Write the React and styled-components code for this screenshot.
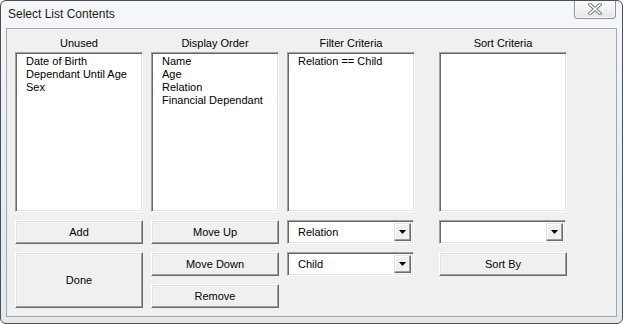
import React from 'react'
import styled, { createGlobalStyle } from 'styled-components'

const GlobalStyle = createGlobalStyle`
    html, body {
        margin:0;
        padding:0;
        background:#ffffff;
    }
    body {
        font-family:"Liberation Sans", Arial, sans-serif;
    }
`

const columns = [
    {
        title: 'Unused',
        items: ['Date of Birth', 'Dependant Until Age', 'Sex'],
    },
    {
        title: 'Display Order',
        items: ['Name', 'Age', 'Relation', 'Financial Dependant'],
    },
    {
        title: 'Filter Criteria',
        items: ['Relation == Child'],
    },
    {
        title: 'Sort Criteria',
        items: [],
        offset: 16,
    },
]

function CloseGlyph() {
    return (
        <svg width="14" height="12" viewBox="0 0 14 12">
            <path d="M2 1.5 L12 10.5 M12 1.5 L2 10.5" stroke="#7a7a7a" strokeWidth="3.6" strokeLinecap="square" fill="none"/>
            <path d="M2 1.5 L12 10.5 M12 1.5 L2 10.5" stroke="#ffffff" strokeWidth="1.6" strokeLinecap="square" fill="none"/>
        </svg>
    )
}

function Combo({value}) {
    return (
        <ComboBox>
            <ComboText>{value}</ComboText>
            <ComboButton>
                <svg width="7" height="4" viewBox="0 0 7 4">
                    <path d="M0 0 H7 L3.5 4 Z" fill="#000"/>
                </svg>
            </ComboButton>
        </ComboBox>
    )
}

export default function App() {
    return (
        <React.Fragment>
            <GlobalStyle/>
            <Window>
                <TitleBar>
                    <Title>Select List Contents</Title>
                    <CloseButton><CloseGlyph/></CloseButton>
                </TitleBar>
                <Client>
                    <Columns>
                        {columns.map((col)=>(
                            <Column key={col.title} offset={col.offset}>
                                <Label>{col.title}</Label>
                                <ListBox>
                                    {col.items.map((item)=>(
                                        <ListItem key={item}>{item}</ListItem>
                                    ))}
                                </ListBox>
                                <Controls>
                                    {col.title === 'Unused' && (
                                        <React.Fragment>
                                            <Button>Add</Button>
                                            <Button tall>Done</Button>
                                        </React.Fragment>
                                    )}
                                    {col.title === 'Display Order' && (
                                        <React.Fragment>
                                            <Button>Move Up</Button>
                                            <Button>Move Down</Button>
                                            <Button>Remove</Button>
                                        </React.Fragment>
                                    )}
                                    {col.title === 'Filter Criteria' && (
                                        <React.Fragment>
                                            <Combo value="Relation"/>
                                            <Combo value="Child"/>
                                        </React.Fragment>
                                    )}
                                    {col.title === 'Sort Criteria' && (
                                        <React.Fragment>
                                            <Combo value=""/>
                                            <Button>Sort By</Button>
                                        </React.Fragment>
                                    )}
                                </Controls>
                            </Column>
                        ))}
                    </Columns>
                </Client>
            </Window>
        </React.Fragment>
    )
}

const Window = styled.div`
    box-sizing:border-box;
    width:623px;
    height:324px;
    border:1px solid #4a4f55;
    border-radius:6px;
    background:linear-gradient(180deg,#f6f7f9 0%,#eceff2 40%,#e6e9ec 100%);
    display:flex;
    flex-direction:column;
    padding:0 5px 6px 5px;
    overflow:hidden;
`
const TitleBar = styled.div`
    height:27px;
    flex:none;
    display:flex;
    align-items:flex-start;
    justify-content:space-between;
`
const Title = styled.div`
    font-size:12px;
    color:#1a1a1a;
    padding:6px 0 0 2px;
    line-height:15px;
`
const CloseButton = styled.div`
    box-sizing:border-box;
    width:42px;
    height:19px;
    margin-top:-1px;
    margin-right:1px;
    border:1px solid #8d9096;
    border-top:none;
    border-radius:0 0 4px 4px;
    background:linear-gradient(180deg,#fbfbfc 0%,#eef0f2 60%,#e4e7ea 100%);
    box-shadow:inset 0 0 0 1px rgba(255,255,255,0.8);
    display:flex;
    align-items:center;
    justify-content:center;
`
const Client = styled.div`
    flex:1;
    border:1px solid #a3a6aa;
    background:#f0f0f0;
`
const Columns = styled.div`
    display:flex;
    padding-left:8px;
    gap:8px;
`
const Column = styled.div`
    width:128px;
    display:flex;
    flex-direction:column;
    margin-left:${props => props.offset ? props.offset + 'px' : '0'};
`
const Label = styled.div`
    font-size:11px;
    line-height:13px;
    text-align:center;
    color:#000;
    padding-top:8px;
    margin-bottom:2px;
`
const ListBox = styled.div`
    box-sizing:border-box;
    height:160px;
    background:#fff;
    border:1px solid;
    border-color:#a0a0a0 #ffffff #ffffff #a0a0a0;
    box-shadow:inset 1px 1px 0 #696969, inset -1px -1px 0 #e3e3e3;
    padding:2px 4px 0 10px;
`
const ListItem = styled.div`
    font-size:11px;
    line-height:13px;
    color:#000;
    white-space:nowrap;
`
const Controls = styled.div`
    display:flex;
    flex-direction:column;
    gap:8px;
    margin-top:8px;
`
const Button = styled.div`
    box-sizing:border-box;
    height:${props => props.tall ? '56px' : '24px'};
    background:#f0f0f0;
    border:1px solid;
    border-color:#ffffff #696969 #696969 #ffffff;
    box-shadow:inset -1px -1px 0 #a0a0a0, inset 1px 1px 0 #e3e3e3;
    display:flex;
    align-items:center;
    justify-content:center;
    font-size:11px;
    color:#000;
`
const ComboBox = styled.div`
    box-sizing:border-box;
    height:24px;
    width:127px;
    background:#fff;
    border:1px solid;
    border-color:#a0a0a0 #ffffff #ffffff #a0a0a0;
    box-shadow:inset 1px 1px 0 #696969, inset -1px -1px 0 #e3e3e3;
    display:flex;
    align-items:center;
    padding:2px 2px 2px 10px;
`
const ComboText = styled.div`
    flex:1;
    font-size:11px;
    color:#000;
`
const ComboButton = styled.div`
    box-sizing:border-box;
    width:17px;
    height:18px;
    background:#f0f0f0;
    border:1px solid;
    border-color:#e3e3e3 #696969 #696969 #e3e3e3;
    box-shadow:inset -1px -1px 0 #a0a0a0, inset 1px 1px 0 #ffffff;
    display:flex;
    align-items:center;
    justify-content:center;
`
